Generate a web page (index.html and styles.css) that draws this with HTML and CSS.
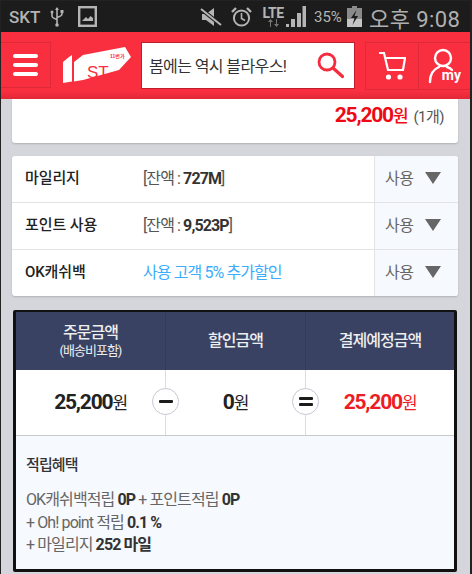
FILE: index.html
```html
<!DOCTYPE html>
<html lang="ko">
<head>
    <meta charset="UTF-8">
    <title>주문결제</title>
    <link rel="stylesheet" href="styles.css">
</head>
<body>
<div class="frame">
    <!-- Status bar -->
    <div class="status">
        <span class="carrier">SKT</span>
        <svg class="ic-usb" width="16" height="20" viewBox="0 0 16 20"><path d="M8 1v18M3 6v3q0 2 5 3.500M13 5v2q0 2-5 3.500" fill="none" stroke="#b4b4b4" stroke-width="1.600"/><path d="M8 0l2 3H6z" fill="#b4b4b4"/><circle cx="3" cy="5" r="1.500" fill="#b4b4b4"/><rect x="11.500" y="3" width="3" height="3" fill="#b4b4b4"/><circle cx="8" cy="18" r="1.800" fill="#b4b4b4"/></svg>
        <svg class="ic-pic" width="19" height="21" viewBox="0 0 19 21"><rect x="1.200" y="1.200" width="16.600" height="18.600" fill="none" stroke="#b4b4b4" stroke-width="2.400"/><path d="M4 15l4-4 2 2 2.500-3 2.500 2v3z" fill="#b4b4b4"/></svg>
        <span class="status-gap"></span>
        <svg class="ic-mute" width="22" height="20" viewBox="0 0 22 20"><path d="M2 7h4l8-6v18l-8-6H2z" fill="#b4b4b4"/><path d="M1 2l20 16" stroke="#1c1c1c" stroke-width="4"/><path d="M1 2l20 16" stroke="#b4b4b4" stroke-width="2"/></svg>
        <svg class="ic-alarm" width="21" height="22" viewBox="0 0 21 22"><circle cx="10.500" cy="12" r="7.600" fill="none" stroke="#b4b4b4" stroke-width="2"/><path d="M10.500 7v5.500l3.500 2" fill="none" stroke="#b4b4b4" stroke-width="1.600"/><path d="M1 6l4-4M20 6l-4-4" stroke="#b4b4b4" stroke-width="2.400"/></svg>
        <span class="lte">LTE<svg width="13" height="8" viewBox="0 0 13 8"><path d="M3 8V3H1l2.500-3L6 3H4v5zM9 0v5H7l2.500 3L12 5h-2V0z" fill="#777"/></svg></span>
        <svg class="ic-signal" width="20" height="21" viewBox="0 0 20 21"><path d="M0 21v-3h3v3zM5 21v-8h4v8zM11 21V7h4v14zM16.500 21V0H20v21z" fill="#b4b4b4"/></svg>
        <span class="battery-pct">35%</span>
        <svg class="ic-batt" width="15" height="21" viewBox="0 0 15 21"><path d="M5 0h5v2h5v19H0V2h5z" fill="#8a8a8a"/><path d="M0 13h15v8H0z" fill="#c4c4c4"/><path d="M9.500 4L4 12h3.500l-2 7L11 10H7.500z" fill="#1c1c1c"/></svg>
        <span class="clock">오후 9:08</span>
    </div>

    <!-- Red header -->
    <div class="topbar">
        <div class="tb-btn tb-menu">
            <span class="bar"></span><span class="bar"></span><span class="bar"></span>
        </div>
        <div class="logo">
            <svg width="68" height="37" viewBox="0 0 68 37">
                <path d="M0 15l6-5 3-2v26.500L0 36zM11 15l9-7 42-8 6 10-12 13-36 10-9 1.500z" fill="#fff"/>
                <text x="24" y="31" class="logo-st">ST</text>
                <text x="47" y="11" class="logo-small">11번가</text>
            </svg>
        </div>
        <div class="search">
            <span class="search-text">봄에는 역시 블라우스!</span>
            <svg width="28" height="28" viewBox="0 0 28 28"><circle cx="11" cy="11" r="8" fill="none" stroke="#f52c3e" stroke-width="2.800"/><path d="M17 17l9.500 8.500" stroke="#f52c3e" stroke-width="3.200" stroke-linecap="round"/></svg>
        </div>
        <div class="tb-right">
            <div class="tb-btn tb-cart">
                <svg width="28" height="30" viewBox="0 0 28 30"><path d="M1 2h5l4 17h15l2-12H7" fill="none" stroke="#fff" stroke-width="2.200"/><circle cx="10.500" cy="26" r="2.600" fill="#fff"/><circle cx="22" cy="26" r="2.600" fill="#fff"/></svg>
            </div>
            <div class="tb-btn tb-my">
                <svg width="28" height="36" viewBox="0 0 28 36"><circle cx="15" cy="10" r="8" fill="none" stroke="#fff" stroke-width="2.400"/><path d="M2 34c0-8 4-13 9-15M19 19c2 .6 4 2 5 3" fill="none" stroke="#fff" stroke-width="2.400" stroke-linecap="round"/></svg>
                <span class="my-label">my</span>
            </div>
        </div>
    </div>

    <div class="content">
        <div class="card total-card">
            <span class="total-price">25,200<small>원</small></span>
            <span class="total-qty">(1개)</span>
        </div>

        <div class="card options">
            <div class="opt-row">
                <div class="opt-name">마일리지</div>
                <div class="opt-info">[잔액 : <b>727M</b>]</div>
                <div class="opt-use">사용<span class="arrow"></span></div>
            </div>
            <div class="opt-row">
                <div class="opt-name">포인트 사용</div>
                <div class="opt-info">[잔액 : <b>9,523P</b>]</div>
                <div class="opt-use">사용<span class="arrow"></span></div>
            </div>
            <div class="opt-row">
                <div class="opt-name">OK캐쉬백</div>
                <div class="opt-info blue">사용 고객 5% 추가할인</div>
                <div class="opt-use">사용<span class="arrow"></span></div>
            </div>
        </div>

        <div class="summary">
            <div class="sum-head">
                <div class="sum-col c1">주문금액<small>(배송비포함)</small></div>
                <div class="sum-col c2">할인금액</div>
                <div class="sum-col c3">결제예정금액</div>
            </div>
            <div class="sum-vals">
                <div class="sum-val c1">25,200<small>원</small></div>
                <div class="sum-val c2">0<small>원</small><span class="op">
                    <svg width="14" height="4" viewBox="0 0 14 4"><rect width="14" height="3" rx="1" fill="#1c1c1c"/></svg></span></div>
                <div class="sum-val c3 red">25,200<small>원</small><span class="op">
                    <svg width="14" height="10" viewBox="0 0 14 10"><rect width="14" height="3" rx="1" fill="#1c1c1c"/><rect y="6" width="14" height="3" rx="1" fill="#1c1c1c"/></svg></span></div>
            </div>
            <div class="benefit">
                <h3>적립혜택</h3>
                <p>OK캐쉬백적립 <b>0P</b> + 포인트적립 <b>0P</b></p>
                <p>+ Oh! point 적립 <b>0.1 %</b></p>
                <p>+ 마일리지 <b>252 마일</b></p>
            </div>
        </div>
    </div>
</div>
</body>
</html>
```
FILE: styles.css
```css
* {
    box-sizing: border-box;
}
html, body {
    margin: 0;
    height: 574px;
    overflow: hidden;
}
body {
    font-family: Roboto, "Noto Sans CJK KR", sans-serif;
    background-color: #d5d6db;
}
.frame {
    height: 574px;
    overflow: hidden;
    border: 1px solid #222;
    border-width: 1px 2px 0 1px;
}

/* status bar */
.status {
    height: 31px;
    background-color: #1c1c1c;
    color: #b4b4b4;
    display: flex;
    align-items: center;
    padding: 0 0 0 8px;
}
.carrier {
    font-size: 17px;
    font-weight: 500;
    width: 40px;
}
.ic-pic {
    margin-left: 13px;
}
.status-gap {
    flex: 1;
}
.ic-alarm {
    margin-left: 9px;
}
.lte {
    display: flex;
    flex-direction: column;
    align-items: center;
    font-size: 14px;
    font-weight: 700;
    line-height: 12px;
    margin-left: 10px;
    width: 22px;
    letter-spacing: -0.5px;
}
.ic-signal {
    margin-left: 2px;
}
.battery-pct {
    font-size: 15px;
    width: 28px;
    margin-left: 8px;
}
.ic-batt {
    margin-left: 5px;
}
.clock {
    font-size: 22px;
    width: 101px;
    margin-left: 7px;
    letter-spacing: 0.4px;
    color: #b0b0b0;
}

/* header */
.topbar {
    height: 67px;
    background: linear-gradient(#f92f40 88%, #e02836);
    display: flex;
    align-items: flex-start;
    padding-top: 10px;
}
.tb-btn {
    height: 46px;
    display: flex;
    align-items: center;
    justify-content: center;
    position: relative;
}
.tb-menu {
    width: 50px;
    flex-direction: column;
    gap: 5px;
    border: 1px solid #dd2a39;
    border-left: 0;
}
.bar {
    display: block;
    width: 25px;
    height: 4px;
    border-radius: 2px;
    background-color: #fff;
}
.logo {
    width: 90px;
    padding: 5px 0 0 12px;
}
.logo-st {
    font: 400 17px "Liberation Sans", sans-serif;
    fill: #f92f40;
}
.logo-small {
    font: 700 5px "Liberation Sans", "Noto Sans CJK KR", sans-serif;
    fill: #f92f40;
}
.search {
    width: 214px;
    height: 47px;
    background-color: #fff;
    border: 1px solid #c11c2c;
    display: flex;
    align-items: center;
    justify-content: space-between;
    padding: 0 10px 2px 7px;
}
.search-text {
    font-size: 16px;
    color: #333;
    letter-spacing: -0.6px;
}
.tb-right {
    display: flex;
    margin-left: 10px;
    flex: 1;
    border: 1px solid #dd2a39;
    border-right: 0;
}
.tb-cart {
    width: 53px;
    border-right: 1px solid #dd2a39;
}
.tb-my {
    flex: 1;
}
.tb-my svg {
    margin-right: 6px;
}
.my-label {
    position: absolute;
    right: 9px;
    bottom: 7px;
    color: #fff;
    font-size: 14px;
    font-weight: 700;
    line-height: 14px;
}

/* content */
.content {
    padding: 0 12px 0 11px;
}
.card {
    background-color: #fff;
    border-radius: 3px;
    box-shadow: 0 1px 2px rgba(0, 0, 0, 0.18);
}
.total-card {
    height: 44px;
    border-radius: 0 0 3px 3px;
    display: flex;
    justify-content: flex-end;
    align-items: baseline;
    padding: 3px 14px 0 0;
}
.total-price {
    font-size: 21px;
    font-weight: 700;
    color: #ee0a14;
    letter-spacing: -1.2px;
}
.total-price small {
    font-size: 17px;
    font-weight: 500;
}
.total-qty {
    font-size: 15px;
    color: #555;
    margin-left: 6px;
    letter-spacing: -0.5px;
}
.options {
    margin-top: 13px;
    height: 140px;
    overflow: hidden;
    display: flex;
    flex-direction: column;
}
.opt-row {
    flex: 1;
    display: flex;
    align-items: center;
    border-bottom: 1px solid #e3e3e5;
    padding-left: 13px;
}
.opt-row:last-child {
    border-bottom: 0;
}
.opt-name {
    width: 118px;
    padding-bottom: 5px;
    font-size: 15px;
    font-weight: 500;
    color: #222;
    letter-spacing: -0.1px;
}
.opt-info {
    flex: 1;
    padding-bottom: 5px;
    font-size: 16px;
    color: #555;
    letter-spacing: -0.9px;
}
.opt-info b {
    color: #333;
    font-weight: 700;
}
.opt-info.blue {
    color: #3aaefc;
}
.opt-use {
    width: 84px;
    height: 100%;
    background-color: #f6f9fd;
    border-left: 1px solid #e3e3e5;
    display: flex;
    align-items: center;
    padding: 0 0 4px 10px;
    font-size: 16px;
    color: #666;
    letter-spacing: -0.5px;
}
.arrow {
    width: 0;
    height: 0;
    margin: 2px 0 0 12px;
    border-left: 8px solid transparent;
    border-right: 8px solid transparent;
    border-top: 12px solid #666;
}

/* summary box */
.summary {
    margin: 14px 0 0 1px;
    width: 444px;
    height: 262px;
    border: 2px solid #111;
    border-width: 2px 3px 3px 3px;
    border-radius: 2px;
    background-color: #f6f9fd;
}
.sum-head {
    height: 58px;
    display: flex;
    background-color: #394263;
    color: #eee;
    font-size: 16px;
    font-weight: 500;
    letter-spacing: -1px;
}
.sum-col {
    display: flex;
    flex-direction: column;
    align-items: center;
    justify-content: center;
    line-height: 20px;
}
.sum-col small {
    font-size: 13px;
    font-weight: 400;
    line-height: 16px;
}
.c1 {
    width: 149px;
}
.c2 {
    width: 140px;
    border-left: 1px solid #333b59;
}
.c3 {
    flex: 1;
    border-left: 1px solid #333b59;
}
.sum-vals {
    height: 66px;
    display: flex;
    background-color: #fff;
    border-bottom: 1px solid #c8c9cd;
}
.sum-val {
    position: relative;
    display: flex;
    align-items: center;
    justify-content: center;
    padding-bottom: 2px;
    font-size: 21px;
    font-weight: 700;
    color: #222;
    letter-spacing: -1.2px;
    border-color: #dcdde0;
}
.sum-val small {
    font-size: 17px;
    font-weight: 400;
}
.sum-val.red {
    color: #ee1c25;
}
.op {
    position: absolute;
    left: -14px;
    top: 18px;
    width: 27px;
    height: 27px;
    border-radius: 50%;
    background-color: #fff;
    border: 1px solid #c4c8d4;
    display: flex;
    align-items: center;
    justify-content: center;
}
.benefit {
    padding: 17px 10px;
    color: #666;
    font-size: 16px;
    letter-spacing: -0.9px;
}
.benefit h3 {
    margin: 0 0 15px;
    font-size: 15px;
    font-weight: 500;
    color: #333;
}
.benefit p {
    margin: 0;
    line-height: 22.5px;
}
.benefit b {
    color: #333;
    font-weight: 700;
}
```
